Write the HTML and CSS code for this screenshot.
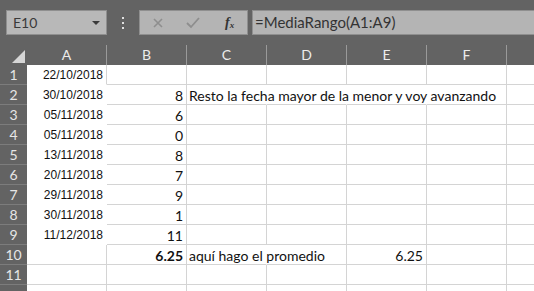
FILE: index.html
```html
<!DOCTYPE html>
<html>
<head>
<meta charset="utf-8">
<link rel="stylesheet" href="styles.css">
</head>
<body>
<div class="bar">
  <div class="namebox"><span class="ref">E10</span><span class="caret"></span></div>
  <div class="dots"><i></i><i></i><i></i></div>
  <div class="btns">
    <svg class="ico" width="14" height="14" viewBox="0 0 14 14"><path d="M3 3 L11 11 M11 3 L3 11" stroke="#8e8e8e" stroke-width="1.6" fill="none"/></svg>
    <svg class="ico" width="16" height="14" viewBox="0 0 16 14"><path d="M2 7 L6 11 L14 2" stroke="#8e8e8e" stroke-width="1.8" fill="none"/></svg>
    <span class="fx">f<sub>x</sub></span>
  </div>
  <div class="formula">=MediaRango(A1:A9)</div>
</div>
<div class="grid">
  <div class="corner"><span class="tri"></span></div>
  <div class="ch">A</div><div class="ch">B</div><div class="ch">C</div><div class="ch">D</div><div class="ch">E</div><div class="ch">F</div><div class="ch"></div>

  <div class="rh">1</div><div class="c date nb br">22/10/2018</div><div class="c"></div><div class="c"></div><div class="c"></div><div class="c"></div><div class="c"></div><div class="c"></div>
  <div class="rh">2</div><div class="c date nb">30/10/2018</div><div class="c num">8</div><div class="c txt nr">Resto la fecha mayor de la menor y voy avanzando</div><div class="c nr"></div><div class="c nr"></div><div class="c"></div><div class="c"></div>
  <div class="rh">3</div><div class="c date nb">05/11/2018</div><div class="c num">6</div><div class="c"></div><div class="c"></div><div class="c"></div><div class="c"></div><div class="c"></div>
  <div class="rh">4</div><div class="c date nb">05/11/2018</div><div class="c num">0</div><div class="c"></div><div class="c"></div><div class="c"></div><div class="c"></div><div class="c"></div>
  <div class="rh">5</div><div class="c date nb">13/11/2018</div><div class="c num">8</div><div class="c"></div><div class="c"></div><div class="c"></div><div class="c"></div><div class="c"></div>
  <div class="rh">6</div><div class="c date nb">20/11/2018</div><div class="c num">7</div><div class="c"></div><div class="c"></div><div class="c"></div><div class="c"></div><div class="c"></div>
  <div class="rh">7</div><div class="c date nb">29/11/2018</div><div class="c num">9</div><div class="c"></div><div class="c"></div><div class="c"></div><div class="c"></div><div class="c"></div>
  <div class="rh">8</div><div class="c date nb">30/11/2018</div><div class="c num">1</div><div class="c"></div><div class="c"></div><div class="c"></div><div class="c"></div><div class="c"></div>
  <div class="rh">9</div><div class="c date nb">11/12/2018</div><div class="c num">11</div><div class="c"></div><div class="c"></div><div class="c"></div><div class="c"></div><div class="c"></div>
  <div class="rh">10</div><div class="c"></div><div class="c num bold">6.25</div><div class="c txt nr">aquí hago el promedio</div><div class="c"></div><div class="c num">6.25</div><div class="c"></div><div class="c"></div>
  <div class="rh">11</div><div class="c"></div><div class="c"></div><div class="c"></div><div class="c"></div><div class="c"></div><div class="c"></div><div class="c"></div>
  <div class="rh"></div><div class="c"></div><div class="c"></div><div class="c"></div><div class="c"></div><div class="c"></div><div class="c"></div><div class="c"></div>
</div>
</body>
</html>
```

FILE: styles.css
```css
html, body {
  margin: 0;
  padding: 0;
  background: #ffffff;
  overflow: hidden;
  width: 534px;
  height: 291px;
}

.bar {
  height: 45px;
  background: #636363;
  display: flex;
  align-items: flex-start;
  padding-top: 10px;
  box-sizing: border-box;
  padding-left: 6px;
}

.namebox {
  width: 101px;
  height: 25px;
  box-sizing: border-box;
  background: #b8b8b8;
  border: 1px solid #8f8f8f;
  display: flex;
  align-items: center;
  justify-content: space-between;
  padding: 0 6px 0 6px;
}

.ref {
  font-family: "Lato", sans-serif;
  font-size: 14px;
  color: #3a3a3a;
}

.caret {
  width: 0;
  height: 0;
  border-left: 4px solid transparent;
  border-right: 4px solid transparent;
  border-top: 4px solid #3a3a3a;
}

.dots {
  width: 32px;
  height: 25px;
  display: flex;
  flex-direction: column;
  align-items: center;
  justify-content: center;
  gap: 3px;
}

.dots i {
  display: block;
  width: 2px;
  height: 2px;
  background: #e0e0e0;
}

.btns {
  width: 109px;
  height: 25px;
  box-sizing: border-box;
  background: #b4b4b4;
  border: 1px solid #8f8f8f;
  display: flex;
  align-items: center;
  padding-left: 11px;
  gap: 20px;
}

.fx {
  font-family: "Liberation Serif", serif;
  font-style: italic;
  font-weight: bold;
  font-size: 14px;
  color: #333;
  margin-left: 4px;
}

.fx sub {
  font-size: 9px;
  vertical-align: -1px;
}

.formula {
  margin-left: 4px;
  flex: 1;
  height: 25px;
  box-sizing: border-box;
  background: #b4b4b4;
  border: 1px solid #8f8f8f;
  border-right: none;
  font-family: "Lato", sans-serif;
  font-size: 15px;
  color: #333;
  line-height: 23px;
  padding-left: 2px;
}

.grid {
  display: grid;
  grid-template-columns: 27px repeat(7, 80px);
  grid-auto-rows: 20px;
}

.corner {
  background: #636363;
  position: relative;
}

.tri {
  position: absolute;
  right: 2px;
  bottom: 2px;
  width: 0;
  height: 0;
  border-left: 13px solid transparent;
  border-bottom: 13px solid #d6d6d6;
}

.ch {
  background: #636363;
  color: #ececec;
  font-family: "Lato", sans-serif;
  font-size: 14px;
  text-align: center;
  line-height: 20px;
  box-sizing: border-box;
  border-right: 1px solid #9a9a9a;
  background-clip: padding-box;
}

.rh {
  background: #636363;
  color: #e6e6e6;
  font-family: "Lato", sans-serif;
  font-size: 14px;
  text-align: center;
  line-height: 20px;
  box-sizing: border-box;
  border-bottom: 1px solid #7c7c7c;
}

.c {
  box-sizing: border-box;
  border-right: 1px solid #d4d4d4;
  border-bottom: 1px solid #d4d4d4;
  white-space: nowrap;
  font-family: "Lato", sans-serif;
  font-size: 14px;
  color: #111;
  line-height: 21px;
  padding: 0 3px;
}

.nb {
  border-right-color: transparent;
  border-bottom-color: transparent;
}

.nb.br {
  border-right-color: #d4d4d4;
}

.nr {
  border-right-color: transparent;
}

.date {
  font-family: "Liberation Sans", Arial, sans-serif;
  font-size: 12px;
  text-align: right;
  color: #111;
}

.num {
  text-align: right;
}

.bold {
  font-weight: bold;
}

.txt {
  overflow: visible;
  padding-left: 2px;
}
```
